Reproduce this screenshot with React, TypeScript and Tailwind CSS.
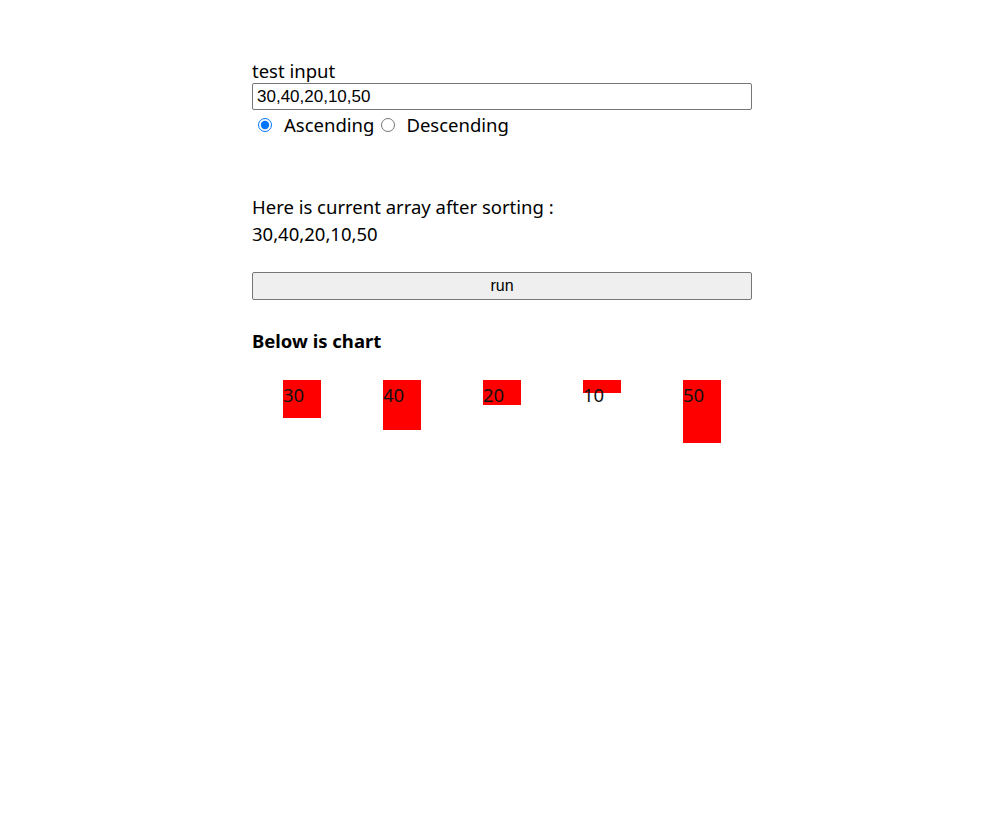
import React, { useState } from "react";

export default function App() {
  const [text, setText] = useState("30,40,20,10,50");
  const [order, setOrder] = useState("asc");
  const values = [30, 40, 20, 10, 50];
  return (
    <div className="min-h-[820px] bg-white text-black" style={{ fontFamily: '"Noto Sans", sans-serif' }}>
      <div className="ml-[252px] w-[500px] pt-[59px] text-[18.5px] leading-[24px]">
        <div>test input</div>
        <input
          className="block w-[500px] h-[27px] border border-[#767676] rounded-[2px] px-[4px] text-[17px] text-black"
          style={{ fontFamily: '"Liberation Sans", Arial, sans-serif' }}
          value={text}
          onChange={(e) => setText(e.target.value)}
        />
        <div className="flex items-center h-[30px]">
          <input
            type="radio"
            name="o"
            className="ml-[6px] mr-[12px] w-[14px] h-[14px] accent-[#0075ff]"
            checked={order === "asc"}
            onChange={() => setOrder("asc")}
          />
          <span>Ascending</span>
          <input
            type="radio"
            name="o"
            className="ml-[7px] mr-[11px] w-[14px] h-[14px]"
            checked={order === "desc"}
            onChange={() => setOrder("desc")}
          />
          <span>Descending</span>
        </div>
        <div className="mt-[55px]">Here is current array after sorting :</div>
        <div className="mt-[3px]">30,40,20,10,50</div>
        <button
          className="mt-[26px] block w-[500px] h-[28px] bg-[#efefef] border border-[#767676] rounded-[2px] text-[16px] leading-[20px]"
          style={{ fontFamily: '"Liberation Sans", Arial, sans-serif' }}
        >
          run
        </button>
        <div className="mt-[29px] font-bold">Below is chart</div>
        <div className="mt-[27px] flex">
          {values.map((v) => (
            <div key={v} className="w-[100px] flex justify-center">
              <div className="relative w-[38px] bg-[#ff0000]" style={{ height: v * 1.25 }}>
                <span className="absolute left-0 top-[3px] whitespace-nowrap text-[#111]">{v}</span>
              </div>
            </div>
          ))}
        </div>
      </div>
    </div>
  );
}
